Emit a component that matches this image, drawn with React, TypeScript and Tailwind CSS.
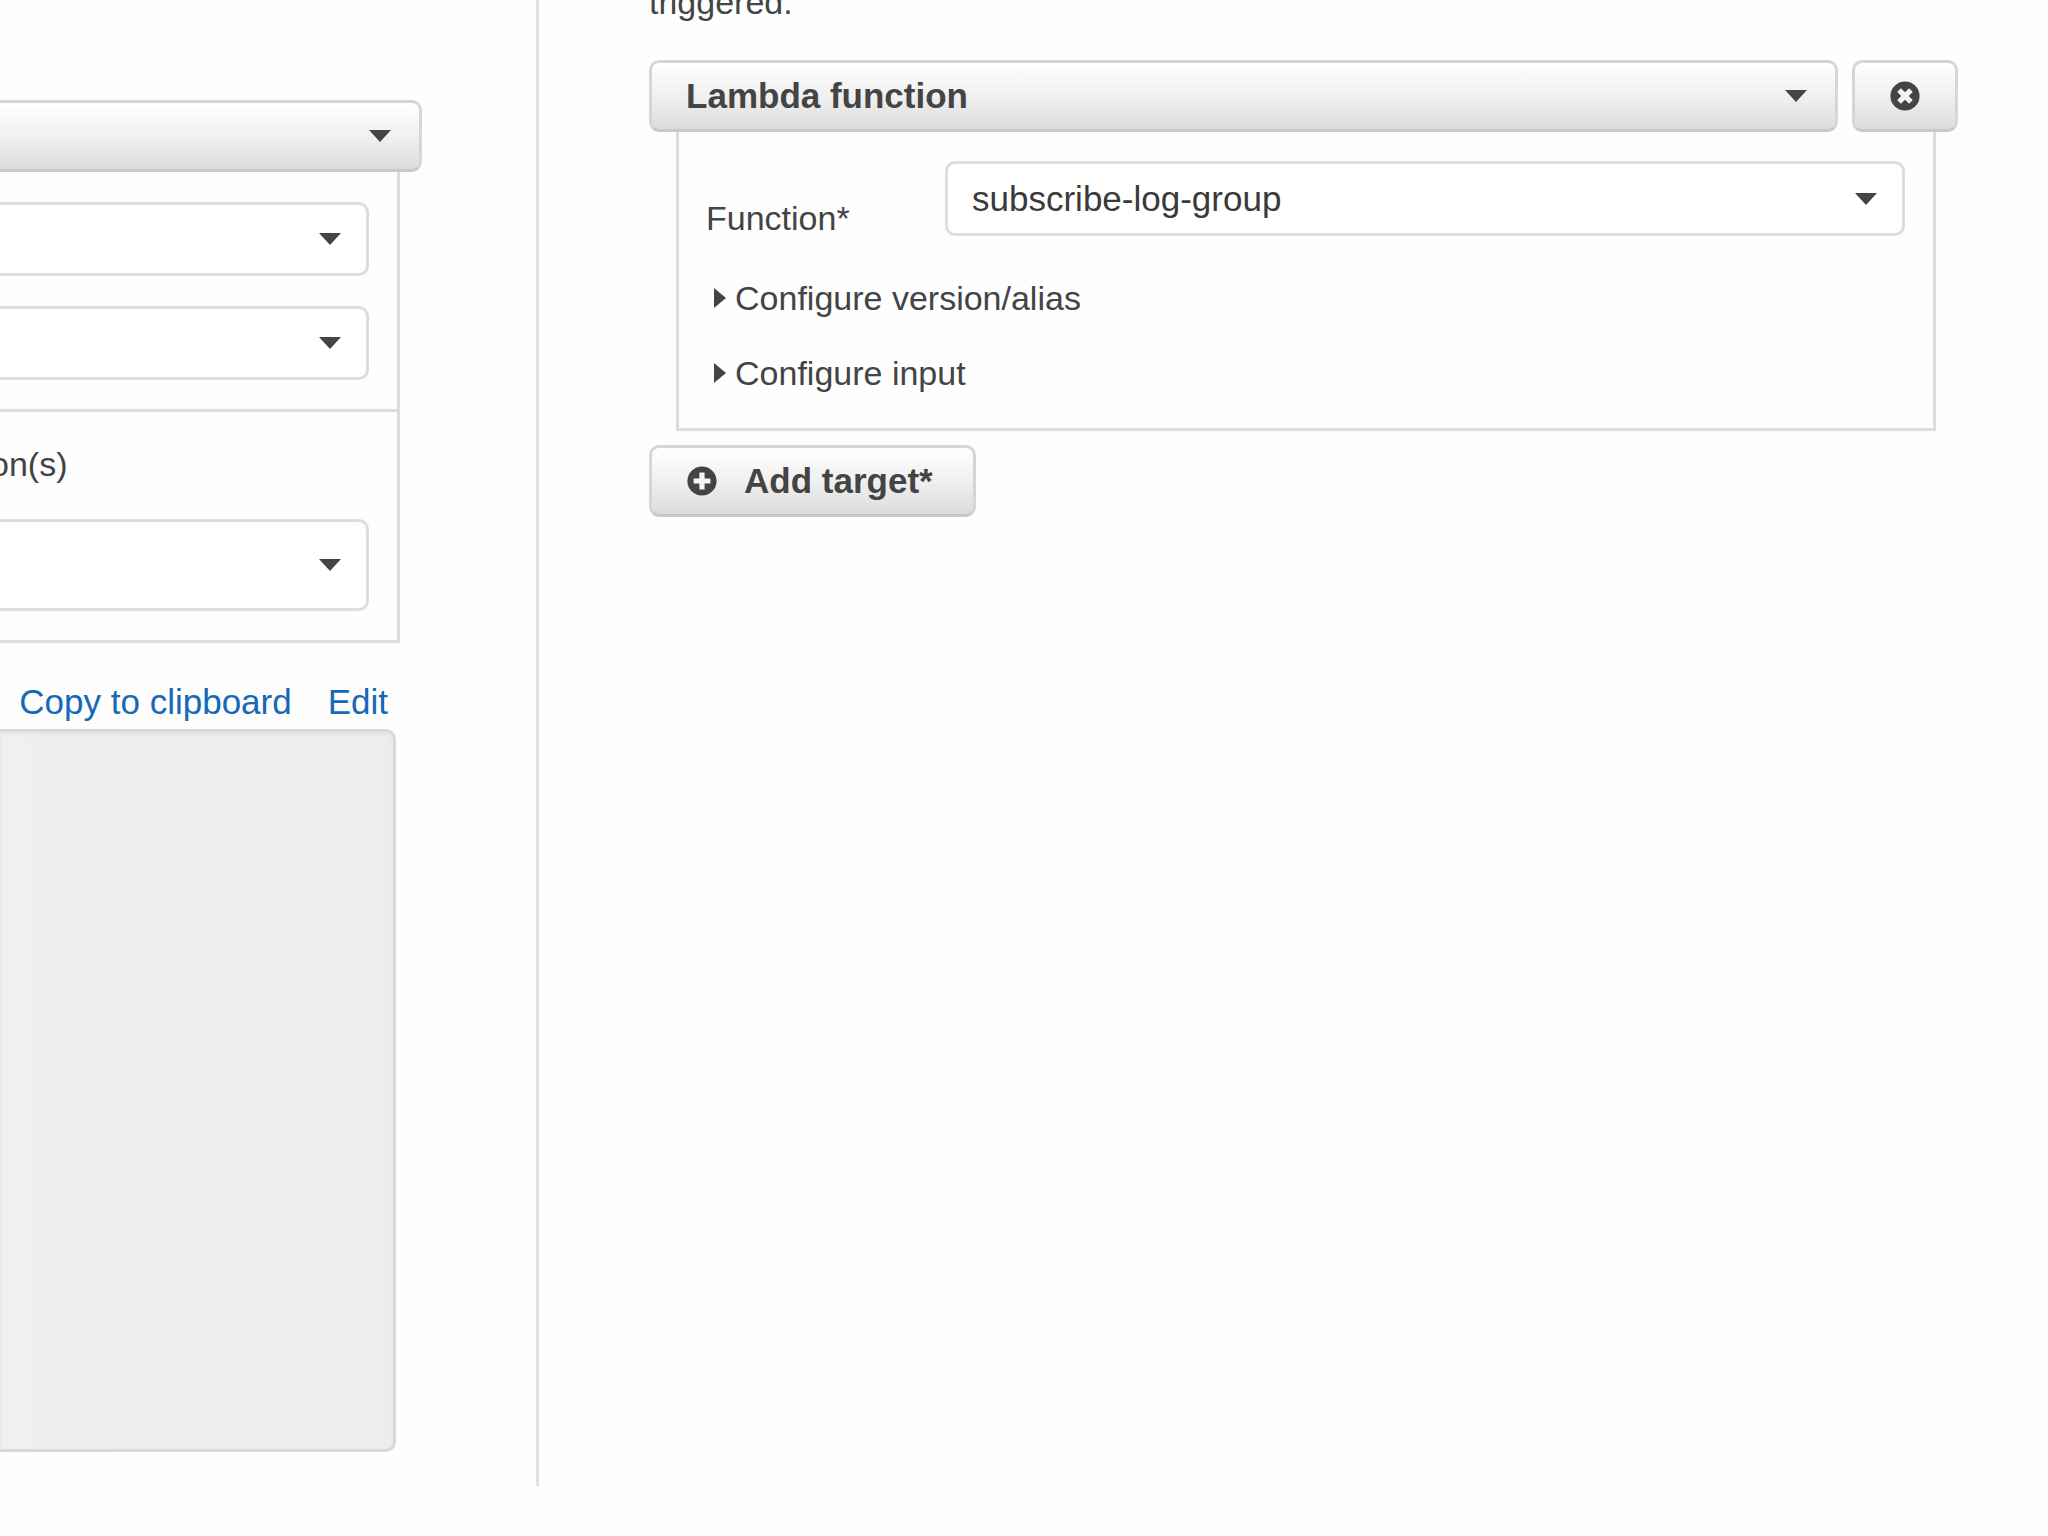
import type { ReactNode } from 'react';
import { clsx } from 'clsx';

// ── icons ────────────────────────────────────────────────────────────────────

function CaretDown({ className }: { className?: string }) {
  return (
    <svg viewBox="0 0 22 12" className={clsx('h-3 w-[22px] fill-[#444]', className)} aria-hidden="true">
      <path d="M0 0h22L11 12z" />
    </svg>
  );
}

function CaretRight() {
  return (
    <svg viewBox="0 0 12 20" className="h-5 w-3 fill-[#444]" aria-hidden="true">
      <path d="M0 0l12 10L0 20z" />
    </svg>
  );
}

function CircleGlyph({ rotated }: { rotated?: boolean }) {
  return (
    <svg viewBox="0 0 30 30" className="size-[30px] shrink-0" aria-hidden="true">
      <circle cx="15" cy="15" r="14.6" fill="#444" />
      <path
        d="M15 6.6v16.8M6.6 15h16.8"
        stroke="#f4f4f4"
        strokeWidth="5.2"
        transform={rotated ? 'rotate(45 15 15)' : undefined}
      />
    </svg>
  );
}

// ── controls ─────────────────────────────────────────────────────────────────

const raised =
  'h-[72px] border-3 border-[#d6d6d6] border-b-[#c8c8c8] bg-linear-to-b from-white via-[#f0f0f0] to-[#dcdcdc] text-[35px] font-bold text-[#444]';

function Dropdown({
  id,
  label,
  value = '',
  look = 'plain',
  bleed,
  className,
}: {
  id?: string;
  label?: string;
  value?: string;
  look?: 'plain' | 'raised';
  bleed?: boolean;
  className?: string;
}) {
  return (
    <div className={clsx('relative', className)}>
      <select
        id={id}
        aria-label={label}
        className={clsx(
          'block w-full appearance-none',
          look === 'raised' ? clsx(raised, 'pl-[34px]') : 'h-full border-3 border-[#ddd] bg-white pt-px pl-6 text-[35px] text-[#3a3a3a]',
          bleed ? 'rounded-r-[10px] border-l-0' : 'rounded-[10px]',
        )}
      >
        <option>{value}</option>
      </select>
      <CaretDown
        className={clsx(
          'pointer-events-none absolute top-1/2 -translate-y-1/2',
          look === 'raised' ? 'right-[31px]' : 'right-7',
        )}
      />
    </div>
  );
}

function Disclosure({ children }: { children: ReactNode }) {
  return (
    <button type="button" aria-expanded="false" className="ml-2 flex items-center gap-[9px]">
      <CaretRight />
      {children}
    </button>
  );
}

// ── columns ──────────────────────────────────────────────────────────────────

function EventSource() {
  return (
    <section className="w-[26.32%] shrink-0 border-r-3 border-[#e0dfe1] pt-[100px] pr-[114px] pb-[34px]">
      <Dropdown look="raised" label="Event source" bleed />

      <div className="mr-[22px] border-r-3 border-b-3 border-[#ddd]">
        <div className="flex flex-col gap-[30px] border-b-3 border-[#ddd] pt-[30px] pr-7 pb-[29px]">
          <Dropdown label="Service name" bleed className="h-[74px]" />
          <Dropdown label="Event type" bleed className="h-[74px]" />
        </div>
        <div className="pt-8 pr-7 pb-[29px]">
          <p className="-ml-2.5">on(s)</p>
          <Dropdown label="Operations" bleed className="mt-[35px] h-[92px]" />
        </div>
      </div>

      <div className="mt-[39px] mr-[34px] flex justify-end gap-9 text-[35px] whitespace-nowrap text-[#1768b8]">
        <a href="#copy">Copy to clipboard</a>
        <a href="#edit">Edit</a>
      </div>
      <div className="mt-[7px] mr-[26px] h-[723px] rounded-r-[10px] border-3 border-l-0 border-[#d8d7d9] bg-linear-to-r from-[#f0f0f0] to-[#eeecef] to-35% inset-shadow-sm" />
    </section>
  );
}

function Targets() {
  return (
    <section className="min-w-0 flex-1 pr-[90px] pl-[110px]">
      <p className="-mt-[18px]">triggered.</p>

      <div className="mt-[38px] flex gap-[14px]">
        <Dropdown look="raised" label="Target type" value="Lambda function" className="flex-1" />
        <button
          type="button"
          aria-label="Remove target"
          className={clsx(raised, 'flex w-[106px] items-center justify-center rounded-[10px]')}
        >
          <CircleGlyph rotated />
        </button>
      </div>

      <div className="mr-[22px] ml-[27px] border-3 border-t-0 border-[#ddd] pt-[29px] pr-7 pb-[35px] pl-[27px]">
        <div className="flex">
          <label htmlFor="function" className="w-[239px] shrink-0 pt-[37px]">
            Function*
          </label>
          <Dropdown id="function" value="subscribe-log-group" className="h-[75px] flex-1" />
        </div>
        <div className="mt-10 flex flex-col items-start gap-[35px]">
          <Disclosure>Configure version/alias</Disclosure>
          <Disclosure>Configure input</Disclosure>
        </div>
      </div>

      <button
        type="button"
        className={clsx(raised, 'mt-[14px] flex items-center gap-[27px] rounded-[10px] pr-10 pl-[35px]')}
      >
        <CircleGlyph />
        Add target*
      </button>
    </section>
  );
}

export default function App() {
  return (
    <main className="min-h-screen overflow-hidden bg-[#fefefe] font-['Liberation_Sans',Arial,sans-serif] text-[34px] leading-10 text-[#444]">
      <div className="flex">
        <EventSource />
        <Targets />
      </div>
    </main>
  );
}
